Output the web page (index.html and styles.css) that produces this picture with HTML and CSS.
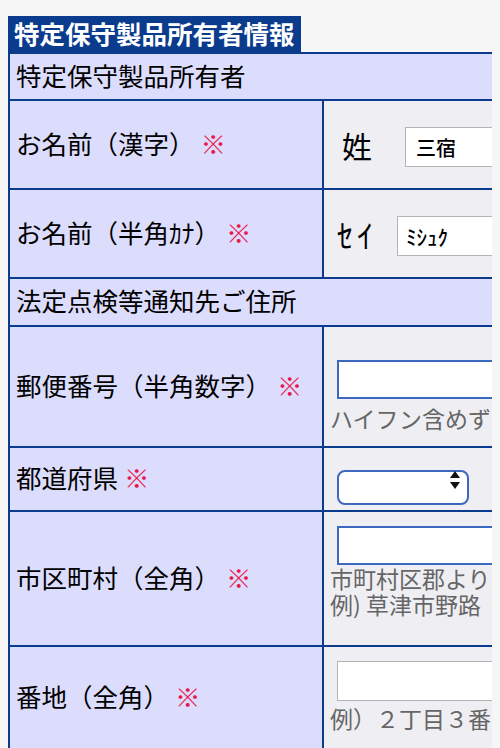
FILE: index.html
```html
<!DOCTYPE html>
<html lang="ja">
<head>
    <meta charset="UTF-8">
    <meta name="viewport" content="width=device-width, initial-scale=1.0">
    <title>特定保守製品所有者情報</title>
    <link rel="stylesheet" href="styles.css">
</head>
<body>
    <h2 class="title">特定保守製品所有者情報</h2>
    <div class="form">
        <div class="row head">特定保守製品所有者</div>

        <div class="row">
            <div class="label">お名前（漢字） <span class="req">※</span></div>
            <div class="field name-row pad-name">
                <span class="name-key kanji">姓</span>
                <input class="text-input plain name-input" type="text" value="三宿">
            </div>
        </div>

        <div class="row">
            <div class="label">お名前（半角ｶﾅ） <span class="req">※</span></div>
            <div class="field name-row pad-name">
                <span class="name-key kana">ｾｲ</span>
                <input class="text-input plain name-input kana-input" type="text" value="ﾐｼｭｸ">
            </div>
        </div>

        <div class="row head">法定点検等通知先ご住所</div>

        <div class="row">
            <div class="label">郵便番号（半角数字） <span class="req">※</span></div>
            <div class="field pad-zip">
                <input class="text-input blue" type="text">
                <p class="note">ハイフン含めず</p>
            </div>
        </div>

        <div class="row">
            <div class="label">都道府県 <span class="req">※</span></div>
            <div class="field pad-pref">
                <div class="select-box">
                    <select class="select"><option></option></select>
                    <svg class="select-arrows" width="10" height="18" viewBox="0 0 10 18">
                        <path d="M5 0 L10 7 L0 7 Z" fill="#111"/>
                        <path d="M0 11 L10 11 L5 18 Z" fill="#111"/>
                    </svg>
                </div>
            </div>
        </div>

        <div class="row">
            <div class="label">市区町村（全角） <span class="req">※</span></div>
            <div class="field pad-city">
                <input class="text-input blue" type="text">
                <p class="note">市町村区郡より<br>例) 草津市野路</p>
            </div>
        </div>

        <div class="row">
            <div class="label">番地（全角） <span class="req">※</span></div>
            <div class="field pad-addr">
                <input class="text-input plain" type="text">
                <p class="note">例）２丁目３番</p>
            </div>
        </div>
    </div>
</body>
</html>
```

FILE: styles.css
```css
html, body {
    overflow: hidden;
}
body {
    margin: 8px;
    background-color: #f6f6f6;
    font-family: "Noto Sans CJK JP", "Noto Sans", sans-serif;
    color: #000;
}
.title {
    display: inline-block;
    margin: 8px 0 0 0;
    padding: 0 6px 3px;
    background: #0b3b8c;
    color: #fff;
    font-size: 25.5px;
    font-weight: bold;
    line-height: 33px;
    vertical-align: top;
}
.form {
    width: 492px;
    border-left: 2px solid #0b3b8c;
    border-top: 2px solid #0b3b8c;
    font-size: 25.5px;
}
.row {
    display: grid;
    grid-template-columns: 314px 1fr;
    border-bottom: 2px solid #0b3b8c;
    background: #dcdcfc;
}
.row.head {
    display: block;
    padding: 0 6px 4px;
    line-height: 41px;
    height: 41px;
}
.row + .row.head {
    height: 42px;
    line-height: 42px;
}
.label {
    display: flex;
    align-items: center;
    padding-left: 6px;
    padding-bottom: 5px;
    border-right: 2px solid #0b3b8c;
    white-space: nowrap;
}
.req {
    color: #e8174c;
    margin-left: 6px;
}
.field {
    background: #eeeef3;
    padding-left: 6px;
    overflow: hidden;
}
.name-row {
    display: flex;
    align-items: center;
}
.pad-name {
    padding-top: 26px;
    padding-bottom: 21px;
}
.name-key {
    font-size: 30px;
    line-height: 38px;
    flex: none;
    position: relative;
    top: -2px;
}
.name-key.kanji {
    margin-left: 12px;
    margin-right: 33px;
}
.name-key.kana {
    margin-left: 7px;
    margin-right: 20px;
    font-size: 32px;
    letter-spacing: 4px;
}
.text-input {
    display: block;
    flex: none;
    box-sizing: border-box;
    width: 320px;
    height: 39px;
    margin: 0 0 0 7px;
    background: #fff;
    font-family: "Noto Sans CJK JP", sans-serif;
    font-size: 20px;
    outline: none;
}
.text-input.blue {
    border: 2px solid #3c68c0;
}
.text-input.plain {
    border: 1px solid #b4b4b4;
    height: 40px;
}
.name-input {
    margin: 0;
    height: 38px;
    padding: 0 10px;
    font-weight: 500;
    color: #000;
}
.kana-input {
    padding: 0 8px;
    font-size: 21px;
}
.note {
    margin: 0;
    color: #666;
    font-size: 23px;
    line-height: 26px;
    white-space: nowrap;
}
.pad-zip {
    padding-top: 33px;
    padding-bottom: 15px;
}
.pad-zip .note {
    margin-top: 6px;
}
.pad-pref {
    padding-top: 14px;
    padding-bottom: 13px;
}
.select-box {
    position: relative;
    width: 132px;
    height: 35px;
    margin-left: 7px;
}
.select {
    appearance: none;
    -webkit-appearance: none;
    box-sizing: border-box;
    width: 100%;
    height: 100%;
    border: 2px solid #3c68c0;
    border-radius: 8px;
    background: #fff;
    outline: none;
}
.select-arrows {
    position: absolute;
    right: 9px;
    top: 9px;
}
.pad-city {
    padding-top: 14px;
    padding-bottom: 28px;
}
.pad-addr {
    padding-top: 14px;
    padding-bottom: 18px;
}
.pad-addr .note {
    margin-top: 4px;
}
```
